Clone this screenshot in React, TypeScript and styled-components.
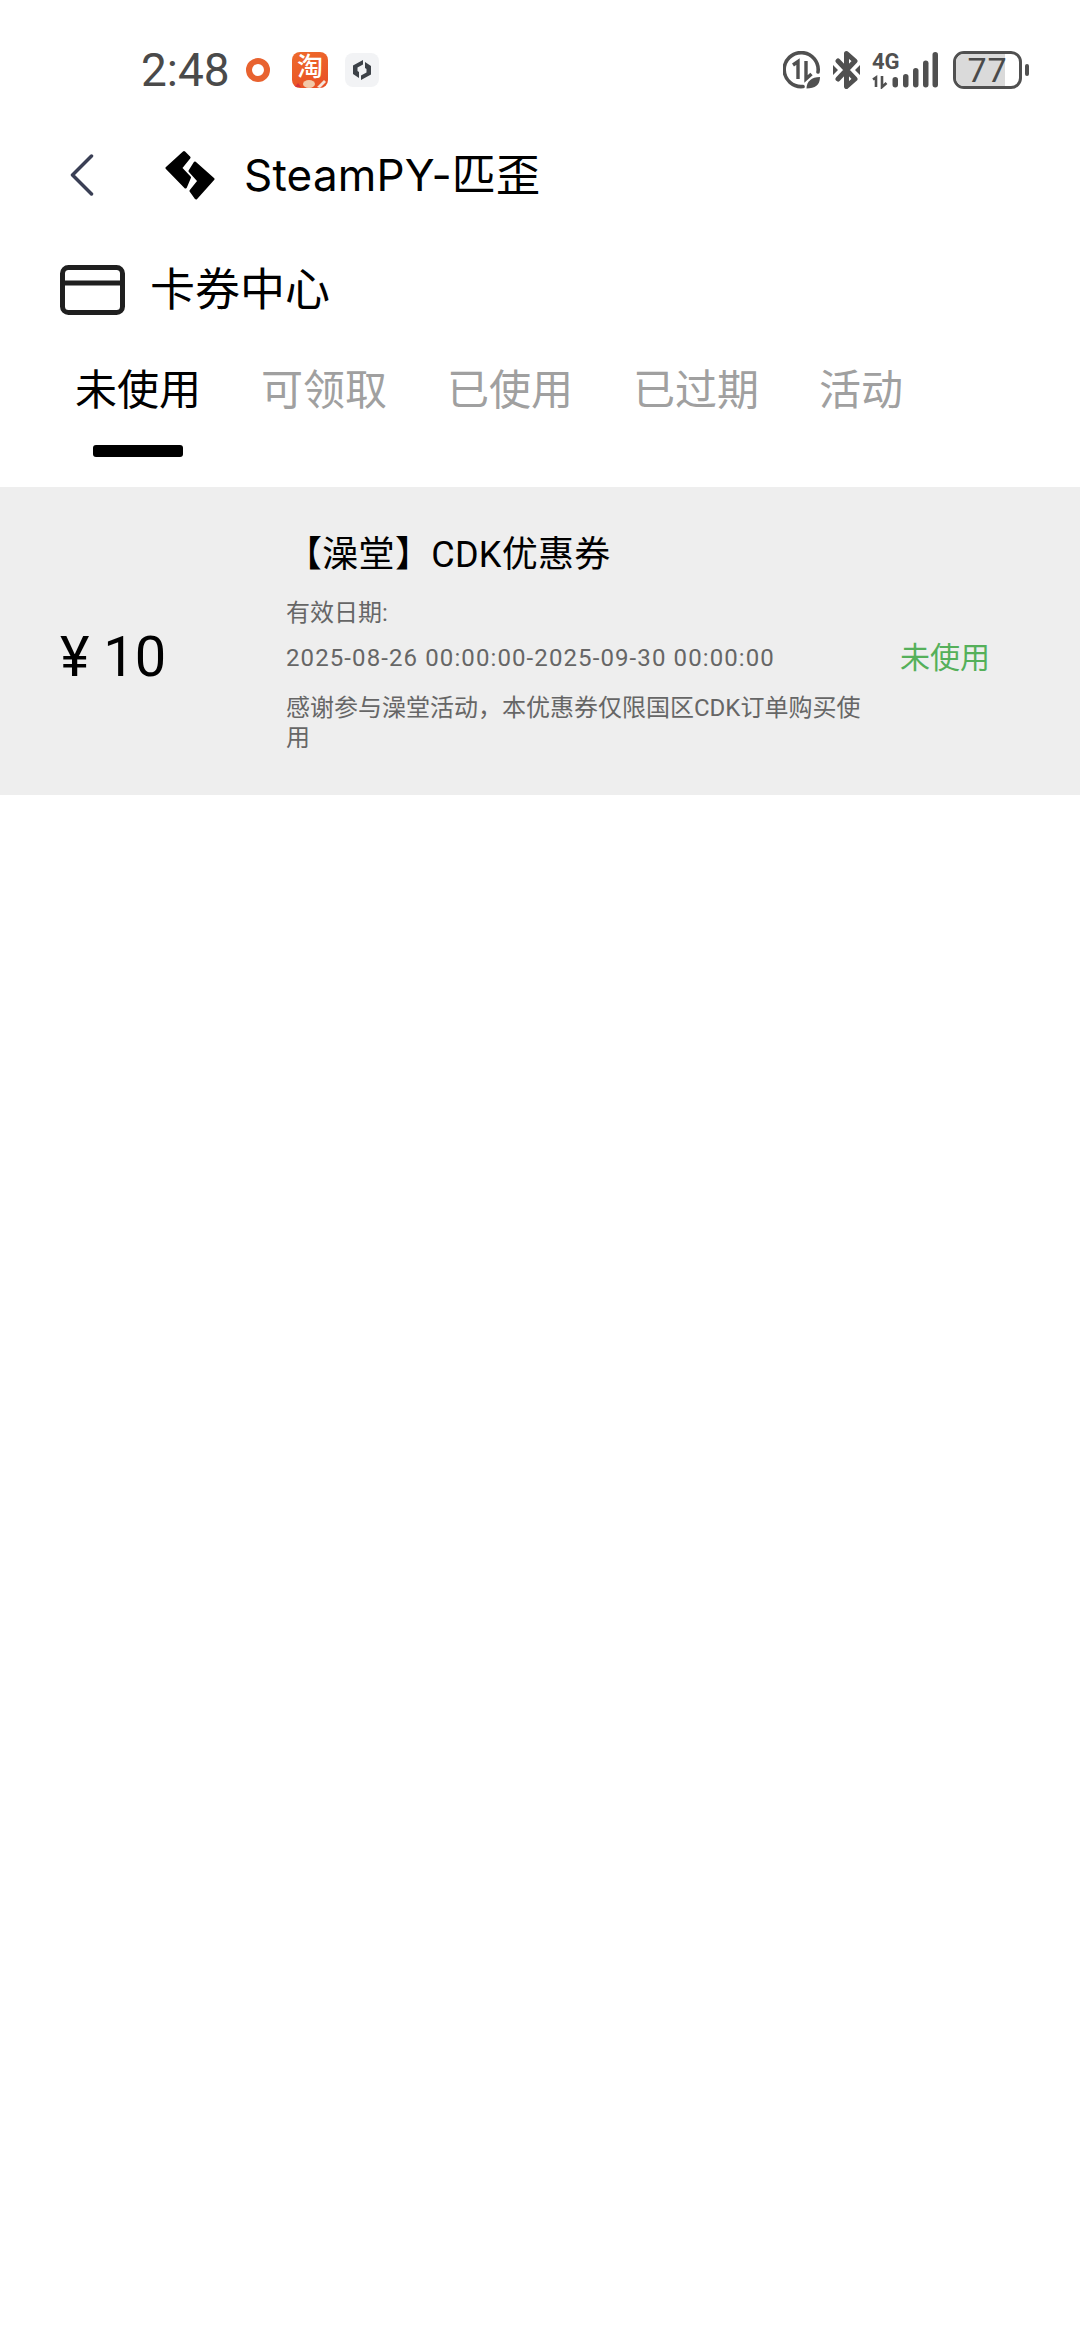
import styled, { createGlobalStyle } from "styled-components";

const GlobalStyle = createGlobalStyle`
  html, body {
    margin: 0;
    padding: 0;
    background: #fff;
  }
  body {
    font-family: "Inter", "Noto Sans CJK SC", sans-serif;
  }
`;

const narrow = `"Roboto", "Noto Sans CJK SC", sans-serif`;

const Page = styled.div`
  width: 1080px;
  height: 2340px;
  background: #fff;
  overflow: hidden;
`;

const StatusBar = styled.div`
  height: 140px;
  padding: 0 51px 0 141px;
  display: flex;
  align-items: center;
  justify-content: space-between;
  box-sizing: border-box;
`;

const StatusLeft = styled.div`
  display: flex;
  align-items: center;
`;

const Clock = styled.span`
  font-family: ${narrow};
  font-size: 46px;
  line-height: 56px;
  font-weight: 400;
  color: #4a4a4a;
  width: 105px;
`;

const NoticeDot = styled.span`
  width: 24px;
  height: 24px;
  border: 6px solid #e8622f;
  border-radius: 50%;
  box-sizing: border-box;
  margin-right: 22px;
`;

const TaobaoIcon = styled.span`
  position: relative;
  width: 36px;
  height: 36px;
  border-radius: 8px;
  background: linear-gradient(160deg, #ee6a2c, #e84e24);
  color: #fff;
  font-size: 26px;
  line-height: 30px;
  text-align: center;
  font-weight: 500;
  margin-right: 17px;
`;

const TaobaoArt = styled.svg`
  position: absolute;
  left: 0;
  bottom: 0;
`;

const AppIcon = styled.span`
  width: 34px;
  height: 34px;
  border-radius: 8px;
  background: #f2f3f5;
  display: flex;
  align-items: center;
  justify-content: center;
`;

const StatusRight = styled.div`
  display: flex;
  align-items: center;
`;

const SignalWrap = styled.svg`
  margin: -8px 0 0 12px;
`;

const BatteryBox = styled.div`
  position: relative;
  width: 69px;
  height: 38px;
  border: 3px solid #505050;
  border-radius: 11px;
  box-sizing: border-box;
  margin-left: 15px;
  overflow: hidden;
  display: flex;
  align-items: center;
  justify-content: center;
`;

const BatteryFill = styled.span`
  position: absolute;
  left: 0;
  top: 0;
  bottom: 0;
  background: #dadada;
`;

const BatteryText = styled.span`
  position: relative;
  font-family: ${narrow};
  font-size: 34px;
  line-height: 32px;
  color: #4a4a4a;
  letter-spacing: 1px;
`;

const BatteryCap = styled.span`
  width: 4px;
  height: 12px;
  border-radius: 2px;
  background: #505050;
  margin-left: 3px;
`;

const NavBar = styled.div`
  height: 70px;
  display: flex;
  align-items: center;
  padding-left: 70px;
`;

const LogoWrap = styled.span`
  display: flex;
  margin-left: 71px;
  margin-right: 29px;
`;

const NavTitle = styled.span`
  font-size: 44px;
  line-height: 60px;
  letter-spacing: 0.2px;
  color: #000;
`;

const SectionHead = styled.div`
  height: 120px;
  padding: 40px 0 0 60px;
  box-sizing: border-box;
  display: flex;
  align-items: center;
`;

const SectionTitle = styled.span`
  font-size: 45px;
  line-height: 60px;
  color: #000;
  margin-left: 25px;
`;

const Tabs = styled.div`
  display: flex;
  gap: 60px;
  height: 157px;
  padding-left: 75px;
  box-sizing: border-box;
`;

const Tab = styled.div`
  display: flex;
  flex-direction: column;
  align-items: center;
`;

const TabLabel = styled.span<{ $active?: boolean }>`
  font-size: 42px;
  line-height: 60px;
  color: ${(p) => (p.$active ? "#000" : "#a0a0a0")};
  margin-top: 30px;
`;

const TabBar = styled.span`
  width: 90px;
  height: 12px;
  border-radius: 3px;
  background: #000;
  margin-top: 25px;
`;

const Coupon = styled.div`
  background: #eee;
  display: grid;
  grid-template-columns: 226px 590px 1fr;
  align-items: center;
  padding: 42px 0 42px 60px;
`;

const Price = styled.div`
  font-family: ${narrow};
  font-size: 56px;
  line-height: 60px;
  color: #000;
  margin-top: 32px;
`;

const CouponBody = styled.div`
  display: flex;
  flex-direction: column;
`;

const CouponTitle = styled.div`
  font-family: ${narrow};
  font-size: 36px;
  line-height: 50px;
  letter-spacing: 0.3px;
  color: #000;
  margin: 1px 0 16px;
`;

const Detail = styled.div<{ $wide?: boolean }>`
  font-family: ${narrow};
  font-size: 24px;
  line-height: 34px;
  letter-spacing: ${(p) => (p.$wide ? "1.1px" : "0")};
  color: #666;
  margin-bottom: 11px;
`;

const Note = styled.div`
  font-family: ${narrow};
  font-size: 24px;
  line-height: 30px;
  color: #666;
  margin-top: 7px;
  width: 590px;
`;

const State = styled.div`
  font-size: 30px;
  line-height: 40px;
  color: #55b05a;
  margin: 32px 0 0 24px;
`;

const tabs = ["未使用", "可领取", "已使用", "已过期", "活动"];

const DataCircleIcon = () => (
  <svg width="37" height="38" viewBox="0 0 37 38" fill="none">
    <path d="M20 35.500A17 17 0 1 1 35 21" stroke="#505050" strokeWidth="3.600" strokeLinecap="round" />
    <path d="M10 14l5-3.500V28" stroke="#505050" strokeWidth="3.400" />
    <path d="M23 10v18l5.500-5" stroke="#505050" strokeWidth="3.400" />
    <path d="M23.500 37.500c0-7 5-11.500 13.500-11.500 0 8-5 11.500-13.500 11.500z" fill="#505050" />
  </svg>
);

const BluetoothIcon = () => (
  <svg width="27" height="38" viewBox="0 0 27 38" fill="none" style={{ marginLeft: 13 }}>
    <path d="M5 10l17 18-8.500 7.500V2.500L22 10 5 28" stroke="#505050" strokeWidth="5" strokeLinejoin="round" strokeLinecap="round" />
    <path d="M0 14l5 5-5 5zM27 14l-5 5 5 5z" fill="#505050" />
  </svg>
);

const SignalIcon = () => (
  <SignalWrap width="66" height="46" viewBox="0 -8 66 46">
    <text x="0" y="18" fontSize="22" fontWeight="700" fill="#505050" fontFamily="Roboto, sans-serif">4G</text>
    <path d="M1 28.500l3-2V36M10 25v11l4.500-4" stroke="#505050" strokeWidth="2.600" fill="none" />
    <rect x="20.500" y="26" width="5.500" height="10.500" rx="2.750" fill="#505050" />
    <rect x="31" y="23" width="5.500" height="13.500" rx="2.750" fill="#505050" />
    <rect x="41" y="17" width="5.500" height="19.500" rx="2.750" fill="#505050" />
    <rect x="51" y="9.500" width="5.500" height="27" rx="2.750" fill="#505050" />
    <rect x="60.500" y="1" width="5.500" height="35.500" rx="2.750" fill="#505050" />
  </SignalWrap>
);

const SteamLogo = () => (
  <svg width="50" height="50" viewBox="5 4 50 50">
    <path
      d="M24 6.500L29 11.500 20.500 22 29.500 31.500 25.500 41 7 22z"
      fill="#000"
      stroke="#000"
      strokeWidth="3"
      strokeLinejoin="round"
    />
    <path
      d="M35 17L53 33 36 52 31 45 39 35 30 25z"
      fill="#000"
      stroke="#000"
      strokeWidth="3"
      strokeLinejoin="round"
    />
  </svg>
);

const HexLogo = () => (
  <svg width="18" height="20" viewBox="0 0 18 20">
    <path d="M10 0L0 5.500V14l6 4v-6l-1.500-1V7.500L10 4.500z" fill="#3d4248" />
    <path d="M8 20l10-5.500V6l-6-4v6l1.500 1v3.500L8 15.500z" fill="#3d4248" />
  </svg>
);

export default function App() {
  return (
    <Page>
      <GlobalStyle />
      <StatusBar>
        <StatusLeft>
          <Clock>2:48</Clock>
          <NoticeDot />
          <TaobaoIcon>
            淘
            <TaobaoArt width="36" height="12" viewBox="0 0 36 12">
              <path d="M3 11l3-4 3 4z" fill="#d8333a" />
              <ellipse cx="17" cy="8" rx="6" ry="4" fill="#f2c9a8" />
              <path d="M25 11l7-7 2 2-6 6z" fill="#f4e4da" />
            </TaobaoArt>
          </TaobaoIcon>
          <AppIcon>
            <HexLogo />
          </AppIcon>
        </StatusLeft>
        <StatusRight>
          <DataCircleIcon />
          <BluetoothIcon />
          <SignalIcon />
          <BatteryBox>
            <BatteryFill style={{ width: "77%" }} />
            <BatteryText>77</BatteryText>
          </BatteryBox>
          <BatteryCap />
        </StatusRight>
      </StatusBar>
      <NavBar>
        <svg width="24" height="42" viewBox="0 0 24 42" fill="none">
          <path d="M21.500 2L2.500 21l19 19" stroke="#3a3f55" strokeWidth="3.500" strokeLinecap="round" strokeLinejoin="round" />
        </svg>
        <LogoWrap>
          <SteamLogo />
        </LogoWrap>
        <NavTitle>SteamPY-匹歪</NavTitle>
      </NavBar>
      <SectionHead>
        <svg width="65" height="50" viewBox="0 0 65 50" fill="none">
          <rect x="2.500" y="2.500" width="60" height="45" rx="6" stroke="#1f1f1f" strokeWidth="5" />
          <path d="M2.500 18h60" stroke="#1f1f1f" strokeWidth="5" />
        </svg>
        <SectionTitle>卡券中心</SectionTitle>
      </SectionHead>
      <Tabs>
        {tabs.map((t, i) => (
          <Tab key={t}>
            <TabLabel $active={i === 0}>{t}</TabLabel>
            {i === 0 && <TabBar />}
          </Tab>
        ))}
      </Tabs>
      <Coupon>
        <Price>¥ 10</Price>
        <CouponBody>
          <CouponTitle>【澡堂】CDK优惠券</CouponTitle>
          <Detail>有效日期:</Detail>
          <Detail $wide>2025-08-26 00:00:00-2025-09-30 00:00:00</Detail>
          <Note>感谢参与澡堂活动，本优惠券仅限国区CDK订单购买使用</Note>
        </CouponBody>
        <State>未使用</State>
      </Coupon>
    </Page>
  );
}
